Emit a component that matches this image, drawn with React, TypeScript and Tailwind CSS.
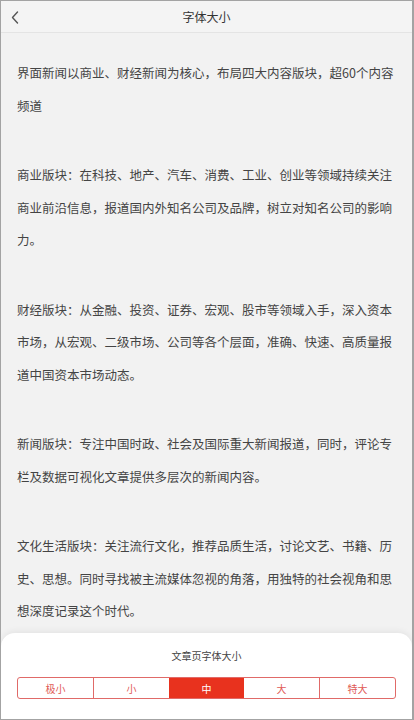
const paragraphs = [
  '界面新闻以商业、财经新闻为核心，布局四大内容版块，超60个内容频道',
  '商业版块：在科技、地产、汽车、消费、工业、创业等领域持续关注商业前沿信息，报道国内外知名公司及品牌，树立对知名公司的影响力。',
  '财经版块：从金融、投资、证券、宏观、股市等领域入手，深入资本市场，从宏观、二级市场、公司等各个层面，准确、快速、高质量报道中国资本市场动态。',
  '新闻版块：专注中国时政、社会及国际重大新闻报道，同时，评论专栏及数据可视化文章提供多层次的新闻内容。',
  '文化生活版块：关注流行文化，推荐品质生活，讨论文艺、书籍、历史、思想。同时寻找被主流媒体忽视的角落，用独特的社会视角和思想深度记录这个时代。',
]

const sizes = ['极小', '小', '中', '大', '特大']

export default function App() {
  const active = 2

  return (
    <div
      className="relative h-[720px] w-[414px] overflow-hidden border-t border-b border-l border-r-2 border-[#a3a3a3] bg-[#f2f2f2]"
      style={{ fontFamily: '"Noto Sans CJK SC", "Noto Sans", sans-serif' }}
    >
      {/* header */}
      <div className="relative flex h-[32px] items-center justify-center border-b border-[#e4e4e4] bg-[#f4f4f4]">
        <button className="absolute left-[9px] top-[9px] flex h-[14px] w-[10px] items-center justify-center">
          <svg width="8" height="13" viewBox="0 0 8 13" fill="none" stroke="#555" strokeWidth="1.4" strokeLinecap="round" strokeLinejoin="round">
            <polyline points="6.5,1 1.5,6.5 6.5,12" />
          </svg>
        </button>
        <h1 className="text-[12px] text-[#333]">字体大小</h1>
      </div>

      {/* article */}
      <div className="flex flex-col gap-[37px] px-[16px] pt-[24px] text-[12.5px] leading-[32.5px] text-[#444]">
        {paragraphs.map((p, i) => (
          <p key={i}>{p}</p>
        ))}
      </div>

      {/* font size sheet */}
      <div className="absolute inset-x-0 bottom-0 rounded-t-[14px] bg-white px-[16px] pt-[16px] pb-[20px] shadow-[0_-2px_6px_rgba(0,0,0,0.06)]">
        <p className="text-center text-[10px] leading-[14px] text-[#444]">文章页字体大小</p>
        <div className="mt-[14px] flex h-[22px] overflow-hidden rounded-[3px] border border-[#e06a68]">
          {sizes.map((s, i) => (
            <div
              key={s}
              className={
                i === active
                  ? 'flex flex-1 items-center justify-center bg-[#e8321e] text-[10px] text-white'
                  : 'flex flex-1 items-center justify-center text-[10px] text-[#e05a55]' +
                    (i < sizes.length - 1 && i !== active - 1 ? ' border-r border-[#e06a68]' : '')
              }
            >
              {s}
            </div>
          ))}
        </div>
      </div>
    </div>
  )
}
